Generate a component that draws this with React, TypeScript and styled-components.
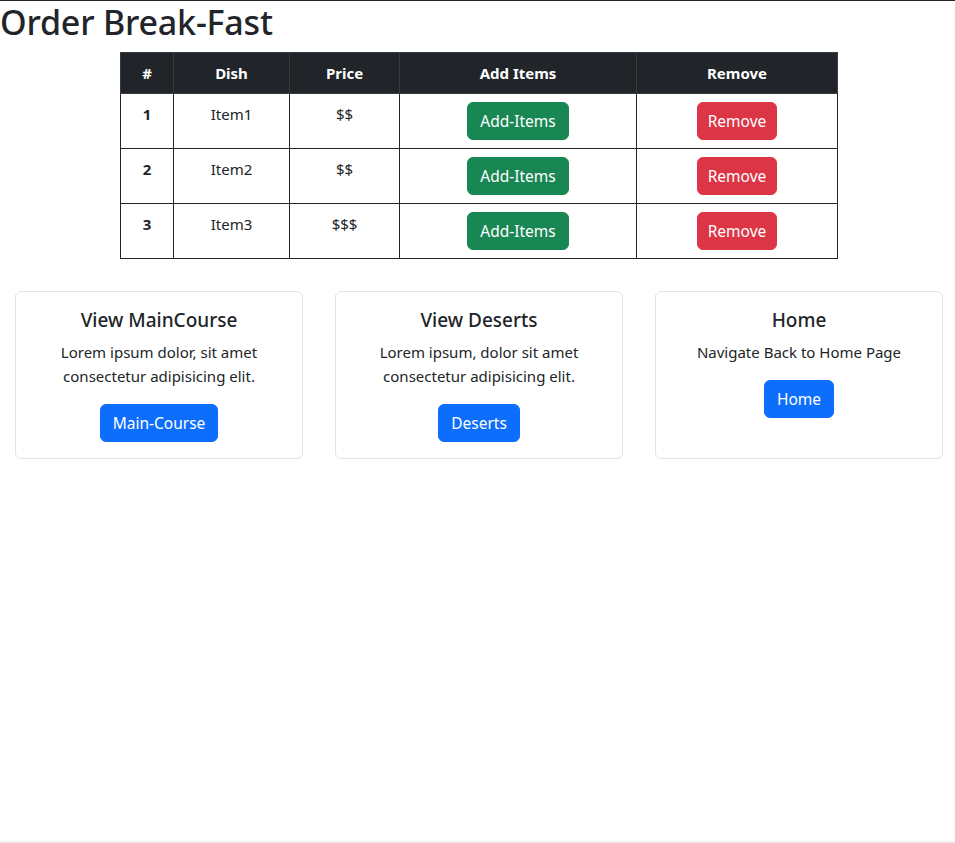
import React from "react";
import styled, { createGlobalStyle } from "styled-components";

const GlobalStyle = createGlobalStyle`
  html, body { margin: 0; padding: 0; background: #fff; }
  body {
    font-family: "Noto Sans", "Open Sans", sans-serif;
    font-size: 16px;
    line-height: 1.5;
    color: #212529;
  }
  * { box-sizing: border-box; }
`;

const Page = styled.div`
  border-top: 1px solid #212529;
  min-height: 843px;
  border-bottom: 2px solid #eeeeee;
  display: flex;
  flex-direction: column;
`;

const Title = styled.h1`
  margin: 0 0 8px 0;
  font-size: 34px;
  font-weight: 500;
  line-height: 43px;
  letter-spacing: -0.2px;
`;

const Table = styled.table`
  width: 718px;
  margin: 0 0 0 120px;
  border-collapse: collapse;
  border: 1px solid #212529;
  text-align: center;
`;

const HeadCell = styled.th`
  background: #212529;
  color: #fff;
  font-weight: 700;
  font-size: 15px;
  padding: 8px;
  border: 1px solid #373b3e;
  line-height: 24px;
`;

const Cell = styled.td<{ $bold?: boolean }>`
  padding: 8px;
  border: 1px solid #212529;
  vertical-align: top;
  font-size: 15px;
  line-height: 24px;
  font-weight: ${(p) => (p.$bold ? 700 : 400)};
`;

const Button = styled.button<{ $variant: "success" | "danger" | "primary" }>`
  display: inline-block;
  font-family: inherit;
  font-size: 15.5px;
  line-height: 24px;
  padding: 6px 12px;
  border-radius: 6px;
  color: #fff;
  cursor: pointer;
  border: 1px solid
    ${(p) =>
      p.$variant === "success" ? "#198754" : p.$variant === "danger" ? "#dc3545" : "#0d6efd"};
  background: ${(p) =>
    p.$variant === "success" ? "#198754" : p.$variant === "danger" ? "#dc3545" : "#0d6efd"};
`;

const RemoveButton = styled(Button)`
  padding: 6px 10px;
`;

const CardRow = styled.div`
  display: flex;
  gap: 32px;
  padding: 0 0 0 15px;
  margin-top: 32px;
`;

const Card = styled.div`
  flex: 0 0 288px;
  border: 1px solid #dfe2e6;
  border-radius: 6px;
  padding: 16px;
  text-align: center;
  height: 168px;
`;

const CardTitle = styled.h5`
  margin: 0 0 8px 0;
  font-size: 19px;
  font-weight: 500;
  line-height: 24px;
`;

const CardText = styled.p`
  margin: 0 0 16px 0;
  font-size: 15px;
  line-height: 24px;
`;

const rows = [
  { n: 1, dish: "Item1", price: "$$" },
  { n: 2, dish: "Item2", price: "$$" },
  { n: 3, dish: "Item3", price: "$$$" },
];

const cards = [
  {
    title: "View MainCourse",
    text: "Lorem ipsum dolor, sit amet consectetur adipisicing elit.",
    btn: "Main-Course",
  },
  {
    title: "View Deserts",
    text: "Lorem ipsum, dolor sit amet consectetur adipisicing elit.",
    btn: "Deserts",
  },
  { title: "Home", text: "Navigate Back to Home Page", btn: "Home" },
];

export default function App() {
  return (
    <>
      <GlobalStyle />
      <Page>
        <Title>Order Break-Fast</Title>
        <Table>
          <colgroup>
            <col style={{ width: 53 }} />
            <col style={{ width: 116 }} />
            <col style={{ width: 110 }} />
            <col style={{ width: 237 }} />
            <col />
          </colgroup>
          <thead>
            <tr>
              <HeadCell>#</HeadCell>
              <HeadCell>Dish</HeadCell>
              <HeadCell>Price</HeadCell>
              <HeadCell>Add Items</HeadCell>
              <HeadCell>Remove</HeadCell>
            </tr>
          </thead>
          <tbody>
            {rows.map((r) => (
              <tr key={r.n}>
                <Cell as="th" $bold>
                  {r.n}
                </Cell>
                <Cell>{r.dish}</Cell>
                <Cell>{r.price}</Cell>
                <Cell>
                  <Button $variant="success">Add-Items</Button>
                </Cell>
                <Cell>
                  <RemoveButton $variant="danger">Remove</RemoveButton>
                </Cell>
              </tr>
            ))}
          </tbody>
        </Table>
        <CardRow>
          {cards.map((c) => (
            <Card key={c.title}>
              <CardTitle>{c.title}</CardTitle>
              <CardText>{c.text}</CardText>
              <Button $variant="primary">{c.btn}</Button>
            </Card>
          ))}
        </CardRow>
      </Page>
    </>
  );
}
